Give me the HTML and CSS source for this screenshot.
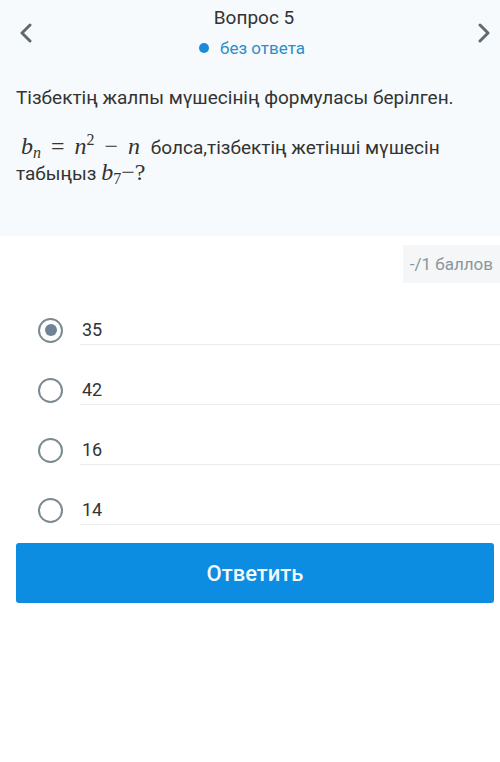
FILE: index.html
```html
<!DOCTYPE html>
<html>
<head>
<meta charset="utf-8">
<link rel="stylesheet" href="styles.css">
</head>
<body>
<div class="top">
  <div class="header">
    <button class="nav prev" aria-label="prev">
      <svg width="14" height="20" viewBox="0 0 14 20"><path d="M11 2 L3 10 L11 18" fill="none" stroke="#5f6a70" stroke-width="3" stroke-linecap="round" stroke-linejoin="round"/></svg>
    </button>
    <div class="title">
      <div class="q">Вопрос 5</div>
      <div class="status"><span class="dot"></span>без ответа</div>
    </div>
    <button class="nav next" aria-label="next">
      <svg width="14" height="20" viewBox="0 0 14 20"><path d="M3 2 L11 10 L3 18" fill="none" stroke="#5f6a70" stroke-width="3" stroke-linecap="round" stroke-linejoin="round"/></svg>
    </button>
  </div>
  <div class="question">
    <p>Тізбектің жалпы мүшесінің формуласы берілген.</p>
    <p><span class="math"><i>b</i><sub><i>n</i></sub><span class="op">=</span><i>n</i><sup>2</sup><span class="op">−</span><i>n</i></span> болса,тізбектің жетінші мүшесін табыңыз <span class="math m2"><i>b</i><sub>7</sub>−?</span></p>
  </div>
</div>
<div class="points-row"><span class="points">-/1 баллов</span></div>
<div class="options">
  <label class="opt"><span class="radio checked"></span><span class="txt">35</span></label>
  <label class="opt"><span class="radio"></span><span class="txt">42</span></label>
  <label class="opt"><span class="radio"></span><span class="txt">16</span></label>
  <label class="opt"><span class="radio"></span><span class="txt">14</span></label>
</div>
<div class="actions"><button class="submit">Ответить</button></div>
</body>
</html>
```
FILE: styles.css
```css
* { box-sizing: border-box; }
html, body { margin: 0; padding: 0; background: #fff; }
body { font-family: Roboto, "Noto Sans", sans-serif; color: #333; width: 500px; }
.top { background: #f6fafc; height: 236px; }
.header { display: flex; align-items: flex-start; justify-content: space-between; height: 70px; }
.nav { background: none; border: 0; padding: 0; width: 52px; height: 66px; display: flex; align-items: center; justify-content: center; }
.nav.prev { justify-content: flex-start; padding-left: 19px; }
.nav.next { justify-content: flex-end; padding-right: 9px; }
.title { flex: 1; display: flex; flex-direction: column; align-items: center; padding-top: 7px; padding-left: 8px; }
.q { font-size: 19px; line-height: 22px; color: #333; }
.status { font-size: 17px; line-height: 20px; color: #2b8fcb; margin-top: 9px; display: flex; align-items: center; margin-left: -4px; }
.dot { width: 10px; height: 10px; border-radius: 50%; background: #1a8ad9; margin-right: 11px; }
.question { padding: 16px 16px 0 16px; font-size: 19px; line-height: 24px; color: #333; }
.question p { margin: 0 0 24px 0; }
.math { font-family: "Liberation Serif", "DejaVu Serif", serif; font-size: 24px; padding-left: 5px; margin-right: 6px; white-space: nowrap; }
.math i { font-style: italic; }
.math sub { font-size: 16px; vertical-align: -4px; line-height: 0; }
.math sup { font-size: 16px; vertical-align: 9px; line-height: 0; }
.math .op { margin: 0 10px; }
.math.m2 { padding-left: 0; margin: 0; }
.points-row { display: flex; justify-content: flex-end; padding-top: 9px; }
.points { background: #f4f6f7; color: #8a969b; font-size: 17px; line-height: 38px; padding: 0 7px 0 7px; }
.options { padding-top: 32px; display: flex; flex-direction: column; gap: 30px; }
.opt { display: flex; align-items: center; height: 30px; padding-left: 38px; }
.radio { width: 25px; height: 25px; border-radius: 50%; border: 2.5px solid #7b8b91; flex: none; display: flex; align-items: center; justify-content: center; margin-right: 17px; }
.radio.checked::after { content: ""; width: 12px; height: 12px; border-radius: 50%; background: #6e8396; }
.txt { flex: 1; align-self: stretch; display: flex; align-items: center; font-size: 18px; color: #333; border-bottom: 1px solid #ebebeb; padding-left: 2px; padding-bottom: 1px; }
.actions { padding: 18px 6px 0 16px; }
.submit { width: 100%; height: 60px; border: 0; border-radius: 3px; background: #0c8de2; color: #f2f9fd; font-family: Roboto, sans-serif; font-size: 22px; font-weight: 500; }
```
